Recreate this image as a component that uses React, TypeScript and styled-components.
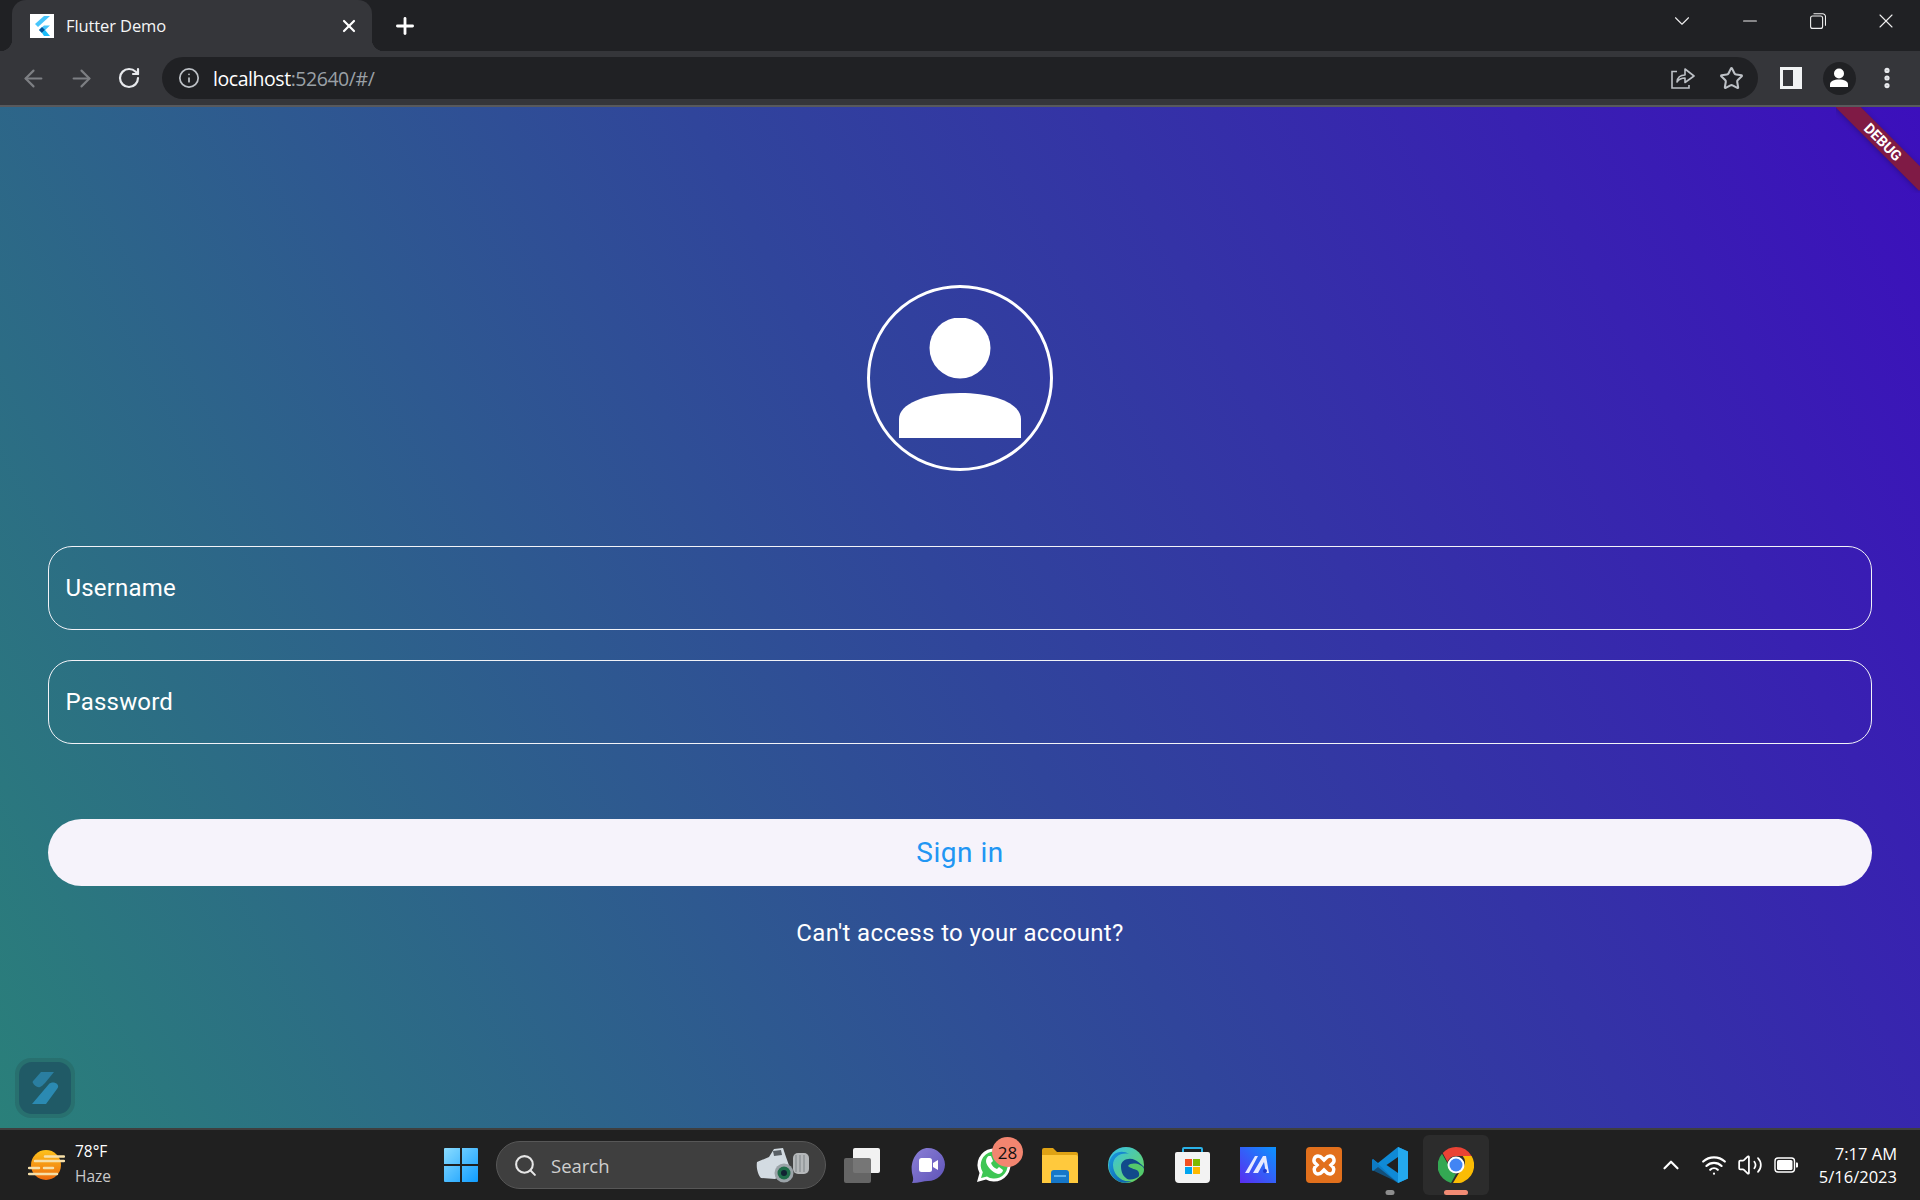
import React from "react";
import styled, { createGlobalStyle } from "styled-components";
import { ArrowLeft, ArrowRight, RotateCw, X, Plus, Info, ChevronDown, ChevronUp, Minus, Star, EllipsisVertical, Search, Wifi, Volume2 } from "lucide-react";

const Global = createGlobalStyle`
  html, body { margin: 0; padding: 0; width: 1920px; height: 1200px; overflow: hidden; background: #202020; }
  #root { width: 1920px; height: 1200px; }
  * { box-sizing: border-box; }
`;

const Page = styled.div`
  width: 1920px; height: 1200px; display: flex; flex-direction: column;
  font-family: "Open Sans", "Noto Sans", sans-serif;
`;

/* ---- browser chrome ---- */
const TabStrip = styled.div`
  height: 51px; flex: none; background: #202124; display: flex; align-items: stretch; padding-left: 12px;
`;
const Tab = styled.div`
  position: relative; width: 360px; background: #35363a; border-radius: 14px 14px 0 0;
  display: flex; align-items: center; padding: 0 13px 0 18px; color: #fff;
  &::before, &::after { content: ""; position: absolute; bottom: 0; width: 12px; height: 12px; }
  &::before { left: -12px; background: radial-gradient(circle at 0 0, transparent 12px, #35363a 12.5px); }
  &::after { right: -12px; background: radial-gradient(circle at 100% 0, transparent 12px, #35363a 12.5px); }
`;
const Favicon = styled.div`
  width: 24px; height: 24px; background: #fff; display: flex; align-items: center; justify-content: center; flex: none;
`;
const TabTitle = styled.span`
  margin-left: 12px; flex: 1; font-size: 16.5px; letter-spacing: -0.1px; white-space: nowrap; color: #f4f5f6;
`;
const NewTab = styled.div`
  width: 66px; display: flex; align-items: center; justify-content: center; color: #fff; padding-left: 0; margin-right: auto;
`;
const Caption = styled.div`
  width: 68px; display: flex; align-items: center; justify-content: center; color: #eee; padding-bottom: 9px;
`;
const Toolbar = styled.div`
  height: 56px; flex: none; background: #35363a; border-bottom: 2px solid #58595c; display: flex; align-items: flex-start; padding: 6px 9px 0;
`;
const ToolBtn = styled.div<{ $color?: string }>`
  width: 48px; height: 42px; flex: none; display: flex; align-items: center; justify-content: center; color: ${(p) => p.$color || "#e8eaed"};
`;
const Omnibox = styled.div`
  flex: 1; height: 42px; margin: 0 9px; background: #202124; border-radius: 21px; display: flex; align-items: center; padding: 0 3px 0 15px;
`;
const Url = styled.div`
  margin-left: 12px; flex: 1; font-size: 19.5px; letter-spacing: -0.45px; color: #9aa0a6; white-space: nowrap;
  b { font-weight: 400; color: #fff; }
`;
const ProfileCircle = styled.div`
  width: 33px; height: 33px; border-radius: 50%; background: #202124; display: flex; align-items: center; justify-content: center;
`;

/* ---- flutter page ---- */
const Main = styled.main`
  position: relative; flex: 1; min-height: 0; padding: 178px 48px 0;
  background: linear-gradient(62deg, #2a807a 0%, #30459b 50%, #3c0fbc 100%);
  display: flex; flex-direction: column; align-items: stretch;
  font-family: Roboto, sans-serif; color: #fff;
`;
const Avatar = styled.div`
  width: 186px; height: 186px; margin: 0 auto 75px; border: 3px solid #fff; border-radius: 50%;
  display: flex; align-items: center; justify-content: center;
`;
const Field = styled.div<{ $mb: number }>`
  height: 84px; flex: none; margin-bottom: ${(p) => p.$mb}px; border: 1.5px solid #f2f3f8; border-radius: 24px;
  display: flex; align-items: center; padding-left: 16.5px; font-size: 24px; letter-spacing: 0.2px; color: #fff;
`;
const SignIn = styled.div`
  height: 67px; flex: none; border-radius: 34px; background: #f6f3fb; color: #2196f3;
  display: flex; align-items: center; justify-content: center; font-size: 28px; letter-spacing: 0.5px;
`;
const Forgot = styled.div`
  margin-top: 31px; text-align: center; font-size: 24px; line-height: 32px; letter-spacing: 0.35px;
`;
const BannerClip = styled.div`
  position: absolute; top: 0; right: 0; width: 84px; height: 86px; overflow: hidden;
`;
const Ribbon = styled.div`
  position: absolute; left: -13px; top: 26px; width: 120px; height: 18px; background: #7f1a45; transform: rotate(45deg);
  display: flex; align-items: center; justify-content: center; color: #fff; font-size: 14.5px; font-weight: 700; box-shadow: 0 1px 5px rgba(0,0,0,.25);
`;
const Launcher = styled.div`
  position: absolute; left: 15px; bottom: 10px; width: 60px; height: 60px; border-radius: 16px; padding: 4px; background: #28706f;
`;
const LauncherInner = styled.div`
  width: 100%; height: 100%; border-radius: 13px; background: #205a66; display: flex; align-items: center; justify-content: center;
`;

/* ---- taskbar ---- */
const Taskbar = styled.footer`
  height: 72px; flex: none; background: #202020; border-top: 2px solid #3f3f3f; display: flex; align-items: center; position: relative; color: #fff;
`;
const Weather = styled.div`
  width: 441px; flex: none; display: flex; align-items: center; padding-left: 28px; gap: 10px;
`;
const WeatherText = styled.div`
  display: flex; flex-direction: column; font-size: 15.5px; line-height: 25px; color: #fff; margin-top: -3px;
  span + span { color: #c9c9c9; }
`;
const StartBtn = styled.div`
  width: 40px; height: 36px; flex: none; display: flex; align-items: center; justify-content: center; margin-left: 0;
`;
const SearchPill = styled.div`
  width: 330px; height: 48px; margin-left: 15px; flex: none; border-radius: 24px; background: #3f3f3f; border: 1.5px solid #575757;
  display: flex; align-items: center; padding: 0 14px 0 16px; color: #cfcfcf; font-size: 18.5px;
`;
const SearchLabel = styled.span`
  margin-left: 13px; flex: 1;
`;
const Apps = styled.div`
  display: flex; align-items: center; margin-left: 3px;
`;
const AppBtn = styled.div<{ $active?: boolean }>`
  position: relative; width: 66px; height: 60px; display: flex; align-items: center; justify-content: center; border-radius: 6px;
  background: ${(p) => (p.$active ? "#2c2c2c" : "transparent")};
`;
const Indicator = styled.span<{ $active?: boolean }>`
  position: absolute; left: 50%; bottom: 0; transform: translateX(-50%); height: 5px; border-radius: 3px;
  width: ${(p) => (p.$active ? "24px" : "9px")}; background: ${(p) => (p.$active ? "#f28b74" : "#8d8d8d")};
`;
const Badge = styled.span`
  position: absolute; left: 31px; top: 2px; width: 31px; height: 30px; border-radius: 50%; background: #f28570; color: #111;
  display: flex; align-items: center; justify-content: center; font-size: 17px;
`;
const Tray = styled.div`
  margin-left: auto; display: flex; align-items: center; padding-right: 23px;
`;
const TrayIcon = styled.div<{ $w: number }>`
  width: ${(p) => p.$w}px; display: flex; justify-content: center; color: #fff;
`;
const Clock = styled.div`
  margin-left: 15px; display: flex; flex-direction: column; align-items: flex-end; font-size: 16.5px; line-height: 23px; margin-top: -1px;
`;

/* ---- drawn logos ---- */
const FlutterLogo = () => (
  <svg width="18" height="22" viewBox="0 0 18 22">
    <path d="M11 1h6L5 12 2 9z" fill="#47c5fb" />
    <path d="M17 10.5h-6L6 15l3 3z" fill="#47c5fb" />
    <path d="M6 15l3-3 3 3-3 3z" fill="#00569e" />
    <path d="M9 18l3-3 5 6h-6z" fill="#00b5f8" opacity=".9" />
  </svg>
);
const AvatarFigure = () => (
  <svg width="122" height="120" viewBox="0 0 122 120">
    <circle cx="61" cy="30" r="30.5" fill="#fff" />
    <path d="M0 120V101C0 86 26 75 61 75s61 11 61 26v19z" fill="#fff" />
  </svg>
);
const SidePanel = () => (
  <svg width="22" height="22" viewBox="0 0 22 22">
    <rect width="22" height="22" fill="#f1f3f4" />
    <rect x="3" y="3" width="10" height="16" fill="#35363a" />
  </svg>
);
const ProfileIcon = () => (
  <svg width="20" height="20" viewBox="0 0 20 20" fill="#fff">
    <circle cx="10" cy="5.5" r="5" />
    <path d="M1 19v-2.5C1 13 5 11.500 10 11.500S19 13 19 16.500V19z" />
  </svg>
);
const ShareIcon = () => (
  <svg width="24" height="22" viewBox="0 0 24 22" fill="none" stroke="#bdc1c6" strokeWidth="1.6">
    <path d="M14 8V2l9 7-9 6.500V11c-4 0-6 1-8 4 .4-4 3-7 8-7z" strokeLinejoin="round" />
    <path d="M6 4.500H1V21h17v-3" />
  </svg>
);
const RestoreIcon = () => (
  <svg width="16" height="16" viewBox="0 0 16 16" fill="none" stroke="#f0f0f0" strokeWidth="1.1">
    <rect x=".6" y="3" width="12" height="12.400" rx="2" />
    <path d="M3.500 .7h9a3 3 0 0 1 3 3v9" />
  </svg>
);
const LauncherLogo = () => (
  <svg width="28" height="34" viewBox="0 0 28 34">
    <path d="M10 1h13l-9 11c-2 2-3 3-5 4-3 1-6-2-7-4-1-1 0-2 1-3z" fill="#2a7ea0" />
    <path d="M18 13c2-2 6-2 8 0 2 2 1 4 0 5L15 33H1z" fill="#2b8ab2" />
  </svg>
);
const Sun = () => (
  <svg width="37" height="30" viewBox="0 0 37 30">
    <defs><linearGradient id="sun" x1="0" y1="0" x2="0" y2="1"><stop offset="0" stopColor="#fdc21c" /><stop offset="1" stopColor="#ee6a0d" /></linearGradient></defs>
    <circle cx="18" cy="15" r="15" fill="url(#sun)" />
    <g stroke="#f6dfa8" strokeWidth="2.500" strokeLinecap="round">
      <path d="M17 6.500h19M7 11h29M1 18h10M16 18h9M1 24h28" />
    </g>
  </svg>
);
const WinLogo = () => (
  <svg width="36" height="36" viewBox="0 0 36 36">
    <defs><linearGradient id="win" x1="0" y1="0" x2="1" y2="1"><stop offset="0" stopColor="#8adcff" /><stop offset="1" stopColor="#0f9cff" /></linearGradient></defs>
    <path fill="url(#win)" d="M1 2a1 1 0 0 1 1-1h15v16H1zM19 1h15a1 1 0 0 1 1 1v15H19zM1 19h16v16H2a1 1 0 0 1-1-1zM19 19h16v15a1 1 0 0 1-1 1H19z" />
  </svg>
);
const Camera = () => (
  <svg width="56" height="36" viewBox="0 0 56 36">
    <rect x="38" y="6" width="16" height="21" rx="5" fill="#b5b8ba" />
    <path d="M41 8v17M45 8v17M49 8v17" stroke="#7f8487" strokeWidth="1" />
    <path d="M2 15l12-5 5-8 9-1 3 9 5 14-16 8-14-1c-3-3-5-10-4-16z" fill="#d3dbe2" />
    <path d="M18 4l8-1 1 5-8 1z" fill="#5a6066" />
    <circle cx="29" cy="26" r="9.500" fill="#9ba3a8" />
    <circle cx="29" cy="26" r="6.500" fill="#1f6d4a" />
    <circle cx="29" cy="26" r="3" fill="#123" />
  </svg>
);
const TaskView = () => (
  <svg width="36" height="35" viewBox="0 0 36 35">
    <rect x="9" y="0" width="27" height="25" rx="2" fill="#f2f2f2" />
    <rect x="0" y="10" width="27" height="25" rx="2" fill="#6b6b6b" fillOpacity=".92" />
  </svg>
);
const ChatIcon = () => (
  <svg width="34" height="35" viewBox="0 0 34 35">
    <defs><linearGradient id="chat" x1="0" y1="0" x2="1" y2="1"><stop offset="0" stopColor="#8b80d6" /><stop offset="1" stopColor="#5e52b8" /></linearGradient></defs>
    <path d="M17 0c9 0 17 7.500 17 16.500S26 33 17 33c-4 0-9 2-16 2 2-3 1-6 0-10C-1 13 6 0 17 0z" fill="url(#chat)" />
    <rect x="8" y="10" width="13" height="14" rx="2.500" fill="#fff" />
    <path d="M22 15l5-3v10l-5-3z" fill="#fff" />
  </svg>
);
const WhatsApp = () => (
  <svg width="36" height="36" viewBox="0 0 36 36">
    <path d="M1 35l2.500-9A16.500 16.500 0 1 1 10 32.500z" fill="#fff" />
    <path d="M5 31l1.800-5.700A13.500 13.500 0 1 1 11 29.500z" fill="#3ec654" />
    <path d="M13 9c-1 0-3 2-3 5 0 5 7 12 12 13 3 0 5-2 5-4l-4-3-2 2c-3-1-5-3-6-6l2-2-2-5z" fill="#fff" />
  </svg>
);
const Folder = () => (
  <svg width="36" height="35" viewBox="0 0 36 35">
    <path d="M0 2a2 2 0 0 1 2-2h9l4 4h19a2 2 0 0 1 2 2v4H0z" fill="#dfa214" />
    <path d="M0 7h34a2 2 0 0 1 2 2v26H0z" fill="#ffc93d" />
    <path d="M9 25a3 3 0 0 1 3-3h12a3 3 0 0 1 3 3v10H9z" fill="#1577c9" />
    <rect x="12" y="27" width="12" height="2" fill="#5db3f0" />
  </svg>
);
const Edge = () => (
  <svg width="36" height="36" viewBox="0 0 36 36">
    <defs>
      <linearGradient id="edge1" x1="0" y1="0" x2="1" y2="1"><stop offset="0" stopColor="#35c1f1" /><stop offset="1" stopColor="#6ed64a" /></linearGradient>
      <linearGradient id="edge2" x1="0" y1="0" x2="1" y2="1"><stop offset="0" stopColor="#1b9de2" /><stop offset="1" stopColor="#0c59a4" /></linearGradient>
    </defs>
    <circle cx="18" cy="18" r="18" fill="url(#edge1)" />
    <path d="M1 16C3 5 14 2 21 7c-8-2-16 3-16 11 0 9 8 18 19 16C12 40-1 29 1 16z" fill="url(#edge2)" />
    <path d="M13 19c0-6 8-9 14-6 4 2 8 6 9 7 0 3-1 7-4 9-4 3-11 5-14 2-4-3-5-8-5-12z" fill="#114a8b" />
    <path d="M20 19c2-3 8-3 12-1 3 1 4 3 4 5 0 3-2 6-6 8 1-2 2-4 0-7-2-2-7-2-10-5z" fill="#54c96b" />
  </svg>
);
const Store = () => (
  <svg width="35" height="36" viewBox="0 0 35 36">
    <path d="M8 6V2a1 1 0 0 1 1-1h17a1 1 0 0 1 1 1v4" fill="none" stroke="#2ab2e8" strokeWidth="2" />
    <path d="M0 7a2 2 0 0 1 2-2h31a2 2 0 0 1 2 2v25a4 4 0 0 1-4 4H4a4 4 0 0 1-4-4z" fill="#f3f3f3" />
    <rect x="10" y="12" width="7" height="7" fill="#f25022" />
    <rect x="18" y="12" width="7" height="7" fill="#7fba00" />
    <rect x="10" y="20" width="7" height="7" fill="#00a4ef" />
    <rect x="18" y="20" width="7" height="7" fill="#ffb900" />
  </svg>
);
const MaLogo = () => (
  <svg width="36" height="36" viewBox="0 0 36 36">
    <defs><linearGradient id="ma" x1="0" y1="1" x2="1" y2="0"><stop offset="0" stopColor="#5a2cf0" /><stop offset="1" stopColor="#0b94ff" /></linearGradient></defs>
    <rect width="36" height="36" fill="url(#ma)" />
    <path d="M5 26L15 9h3L9 26zM13 26L23 9h3l3 17h-3l-2-11-6 11z" fill="#e6e9ff" />
    <circle cx="25" cy="24" r="2" fill="#1e3ad0" />
  </svg>
);
const Xampp = () => (
  <svg width="36" height="36" viewBox="0 0 36 36">
    <rect width="36" height="36" rx="4" fill="#e2701c" />
    <path d="M12 9c-4 0-5 5-3 7l2 2-2 2c-2 3 0 7 3 7s4-2 6-4c2 2 3 4 6 4s5-4 3-7l-2-2 2-2c2-2 1-7-3-7-3 0-4 2-6 4-2-2-3-4-6-4z" fill="none" stroke="#fff" strokeWidth="3.500" />
  </svg>
);
const VSCode = () => (
  <svg width="36" height="36" viewBox="0 0 36 36">
    <path d="M26 0l10 4.500v27L26 36 6 20l-5 4-1-1v-10l1-1 5 4z" fill="#0f8ad6" />
    <path d="M26 0l10 4.500v27L26 36z" fill="#24a9ee" />
    <path d="M26 10L14.500 18 26 26z" fill="#202020" />
    <path d="M0 13l1-1 25 24-5-3L0 23z" fill="#0b6fb5" opacity=".6" />
  </svg>
);
const Chrome = () => (
  <svg width="36" height="36" viewBox="0 0 36 36">
    <path d="M18 0a18 18 0 0 1 15.600 9H18a9 9 0 0 0-8.500 6L4.700 6A18 18 0 0 1 18 0z" fill="#ea4335" />
    <path d="M4 6.800l8.500 14.700A8 8 0 0 0 18 27l-5 9A18 18 0 0 1 4 6.800z" fill="#34a853" />
    <path d="M33.600 9A18 18 0 0 1 15 36l8-13.500A9 9 0 0 0 24.700 9z" fill="#fbbc04" />
    <circle cx="18" cy="18" r="8.500" fill="#fff" />
    <circle cx="18" cy="18" r="6.500" fill="#4285f4" />
  </svg>
);
const Battery = () => (
  <svg width="24" height="16" viewBox="0 0 24 16" fill="none">
    <rect x="1" y="1" width="19.500" height="14" rx="3" stroke="#fff" strokeWidth="1.400" />
    <rect x="3" y="3" width="15.500" height="10" rx="1.500" fill="#fff" />
    <path d="M22 5.500h1a1 1 0 0 1 1 1v3a1 1 0 0 1-1 1h-1z" fill="#fff" />
  </svg>
);

const apps: { icon: React.ReactNode; badge?: string; running?: boolean; active?: boolean }[] = [
  { icon: <TaskView /> },
  { icon: <ChatIcon /> },
  { icon: <WhatsApp />, badge: "28" },
  { icon: <Folder /> },
  { icon: <Edge /> },
  { icon: <Store /> },
  { icon: <MaLogo /> },
  { icon: <Xampp /> },
  { icon: <VSCode />, running: true },
  { icon: <Chrome />, running: true, active: true },
];

export default function App() {
  return (
    <Page>
      <Global />
      <TabStrip>
        <Tab>
          <Favicon><FlutterLogo /></Favicon>
          <TabTitle>Flutter Demo</TabTitle>
          <X size={20} strokeWidth={2.6} color="#fff" />
        </Tab>
        <NewTab><Plus size={26} strokeWidth={2.6} /></NewTab>
        <Caption><ChevronDown size={26} strokeWidth={1} /></Caption>
        <Caption><Minus size={22} strokeWidth={1.2} /></Caption>
        <Caption><RestoreIcon /></Caption>
        <Caption><X size={24} strokeWidth={1.1} /></Caption>
      </TabStrip>
      <Toolbar>
        <ToolBtn $color="#7d7f83"><ArrowLeft size={27} strokeWidth={1.9} /></ToolBtn>
        <ToolBtn $color="#7d7f83"><ArrowRight size={27} strokeWidth={1.9} /></ToolBtn>
        <ToolBtn><RotateCw size={24} strokeWidth={2.2} /></ToolBtn>
        <Omnibox>
          <ToolBtnSmall><Info size={22} strokeWidth={1.9} color="#bdc1c6" /></ToolBtnSmall>
          <Url><b>localhost</b>:52640/#/</Url>
          <ToolBtn><ShareIcon /></ToolBtn>
          <ToolBtn><Star size={25} strokeWidth={2} color="#bdc1c6" /></ToolBtn>
        </Omnibox>
        <ToolBtn><SidePanel /></ToolBtn>
        <ToolBtn><ProfileCircle><ProfileIcon /></ProfileCircle></ToolBtn>
        <ToolBtn><EllipsisVertical size={26} strokeWidth={2.8} /></ToolBtn>
      </Toolbar>
      <Main>
        <Avatar><AvatarFigure /></Avatar>
        <Field $mb={30}>Username</Field>
        <Field $mb={75}>Password</Field>
        <SignIn>Sign in</SignIn>
        <Forgot>Can't access to your account?</Forgot>
        <BannerClip><Ribbon>DEBUG</Ribbon></BannerClip>
        <Launcher><LauncherInner><LauncherLogo /></LauncherInner></Launcher>
      </Main>
      <Taskbar>
        <Weather>
          <Sun />
          <WeatherText><span>78°F</span><span>Haze</span></WeatherText>
        </Weather>
        <StartBtn><WinLogo /></StartBtn>
        <SearchPill>
          <Search size={25} strokeWidth={2} color="#e6e6e6" />
          <SearchLabel>Search</SearchLabel>
          <Camera />
        </SearchPill>
        <Apps>
          {apps.map((a, i) => (
            <AppBtn key={i} $active={a.active}>
              {a.icon}
              {a.badge && <Badge>{a.badge}</Badge>}
              {a.running && <Indicator $active={a.active} />}
            </AppBtn>
          ))}
        </Apps>
        <Tray>
          <TrayIcon $w={48}><ChevronUp size={26} strokeWidth={2} /></TrayIcon>
          <TrayIcon $w={38}><Wifi size={26} strokeWidth={2} /></TrayIcon>
          <TrayIcon $w={35}><Volume2 size={26} strokeWidth={1.6} /></TrayIcon>
          <TrayIcon $w={36}><Battery /></TrayIcon>
          <Clock><span>7:17 AM</span><span>5/16/2023</span></Clock>
        </Tray>
      </Taskbar>
    </Page>
  );
}

const ToolBtnSmall = styled.div`
  width: 24px; height: 24px; flex: none; display: flex; align-items: center; justify-content: center;
`;
